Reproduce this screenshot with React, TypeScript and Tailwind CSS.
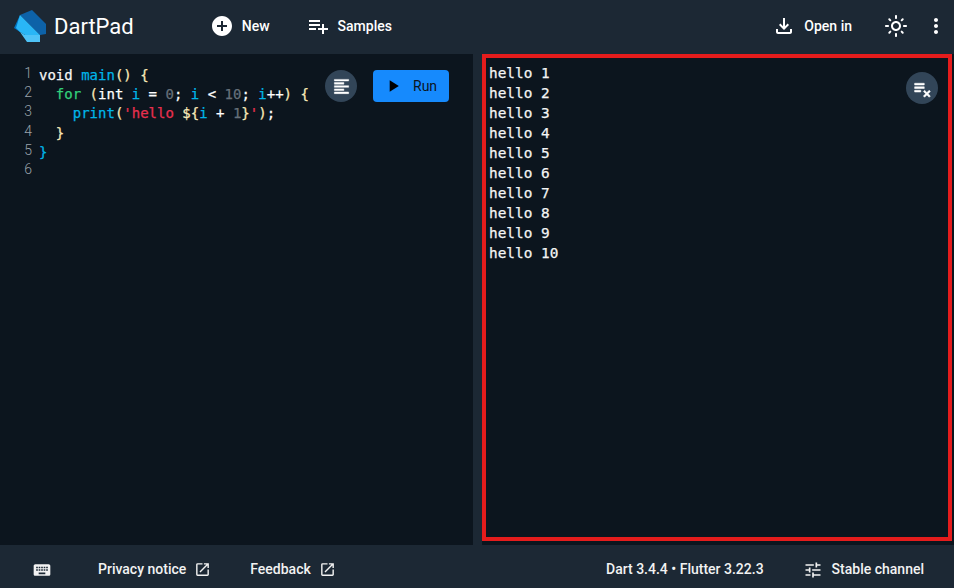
import {
  MdAddCircle,
  MdKeyboard,
  MdLaunch,
  MdMoreVert,
  MdOutlineFileDownload,
  MdOutlineLightMode,
  MdPlayArrow,
  MdPlaylistAdd,
  MdTune,
} from 'react-icons/md';

const DartLogo = () => (
  <svg width="32" height="34" viewBox="0 0 32 34" className="shrink-0">
    <path d="M6 6 L18 1 L32 15 L32 25 L26 26 Z" fill="#0d62a8" />
    <path d="M0 19 L6 6 L6 23 Z" fill="#0175c2" />
    <path d="M6 6 L26 26 L11 26 L6 23 L2 19 Z" fill="#29b6f6" />
    <path d="M11 26 L26 26 L26 33 L13 33 L6 23 Z" fill="#4fc3f7" />
  </svg>
);

// heavier than the icon package glyphs, the reference draws these with a thick stroke
const FormatIcon = () => (
  <svg width="19" height="19" viewBox="0 0 24 24" fill="currentColor" stroke="currentColor" strokeWidth="0.6">
    <path d="M15 15H3v2h12v-2zm0-8H3v2h12V7zM3 13h18v-2H3v2zm0 8h18v-2H3v2zM3 3v2h18V3H3z" />
  </svg>
);

const ClearIcon = () => (
  <svg width="21" height="21" viewBox="0 0 24 24" fill="currentColor" stroke="currentColor" strokeWidth="0.6">
    <path d="M14 10H3v2h11v-2zm0-4H3v2h11V6zM3 16h7v-2H3v2zm11.41 6L17 19.41 19.59 22 21 20.59 18.41 18 21 15.41 19.59 14 17 16.59 14.41 14 13 15.41 15.59 18 13 20.59 14.41 22z" />
  </svg>
);

const HeaderButton = ({ icon, label }: { icon: React.ReactNode; label: string }) => (
  <div className="flex items-center gap-2 text-white text-sm font-medium">
    {icon}
    <span>{label}</span>
  </div>
);

const Kw = ({ c, children }: { c: string; children: React.ReactNode }) => <span className={c}>{children}</span>;

const output = Array.from({ length: 10 }, (_, i) => `hello ${i + 1}`);

export default function App() {
  return (
    <div className="w-[954px] h-[588px] flex flex-col overflow-hidden bg-[#0c151e] font-['Roboto',sans-serif]">
      <header className="h-[54px] shrink-0 bg-[#1c2834] flex items-center pb-[2px] pl-[14px] pr-[6px]">
        <DartLogo />
        <span className="ml-2 text-[22px] text-white">DartPad</span>
        <div className="ml-[76px]">
          <HeaderButton icon={<MdAddCircle size={24} />} label="New" />
        </div>
        <div className="ml-[36px]">
          <HeaderButton icon={<MdPlaylistAdd size={24} />} label="Samples" />
        </div>
        <div className="ml-auto">
          <HeaderButton icon={<MdOutlineFileDownload size={24} />} label="Open in" />
        </div>
        <MdOutlineLightMode size={24} className="ml-[32px] text-white" />
        <MdMoreVert size={24} className="ml-4 text-white" />
      </header>

      <main className="flex-1 flex min-h-0">
        <section className="relative w-[473px] shrink-0 pt-[11px] pl-[23px] font-['DejaVu_Sans_Mono',monospace] text-[14px] leading-[19.2px] flex gap-[7px]">
          <div className="w-[9px] mt-[-1px] text-right text-[#9aa3ab] font-light font-['Roboto',sans-serif]">
            {[1, 2, 3, 4, 5, 6].map((n) => (
              <div key={n}>{n}</div>
            ))}
          </div>
          <div className="mt-[1px] whitespace-pre text-white [-webkit-text-stroke:0.25px]">
            <div>
              <Kw c="text-[#f5f5f5]">void</Kw> <Kw c="text-[#00b4e8]">main</Kw>
              <Kw c="text-[#f8e8b8]">()</Kw> <Kw c="text-[#f8e8b8]">{'{'}</Kw>
            </div>
            <div>
              {'  '}
              <Kw c="text-[#33d17a]">for</Kw> <Kw c="text-[#f8e8b8]">(</Kw>int <Kw c="text-[#00b4e8]">i</Kw> ={' '}
              <Kw c="text-[#66707a]">0</Kw>; <Kw c="text-[#00b4e8]">i</Kw> {'<'} <Kw c="text-[#66707a]">10</Kw>;{' '}
              <Kw c="text-[#00b4e8]">i</Kw>++<Kw c="text-[#f8e8b8]">)</Kw> <Kw c="text-[#f8e8b8]">{'{'}</Kw>
            </div>
            <div>
              {'    '}
              <Kw c="text-[#00b4e8]">print</Kw>
              <Kw c="text-[#f8e8b8]">(</Kw>
              <Kw c="text-[#e8304f]">'hello </Kw>
              <Kw c="text-[#f8e8b8]">{'${'}</Kw>
              <Kw c="text-[#00b4e8]">i</Kw> + <Kw c="text-[#66707a]">1</Kw>
              <Kw c="text-[#f8e8b8]">{'}'}</Kw>
              <Kw c="text-[#e8304f]">'</Kw>
              <Kw c="text-[#f8e8b8]">)</Kw>;
            </div>
            <div>
              {'  '}
              <Kw c="text-[#f8e8b8]">{'}'}</Kw>
            </div>
            <div>
              <Kw c="text-[#00b4e8]">{'}'}</Kw>
            </div>
          </div>

          <div className="absolute top-[16px] left-[325px] flex items-center gap-4">
            <div className="size-8 rounded-full bg-[#324558] flex items-center justify-center text-white">
              <FormatIcon />
            </div>
            <div className="w-[76px] h-8 rounded bg-[#168afd] flex items-center pl-[10px] gap-[10px] text-[#0c151e] text-sm font-['Roboto',sans-serif]">
              <MdPlayArrow size={20} className="text-black" />
              <span>Run</span>
            </div>
          </div>
        </section>

        <div className="w-[9px] shrink-0 bg-[#1c2834]" />

        <section className="relative flex-1 mb-1 mr-[2px] border-4 border-[#e51c1c] pl-[3px] pt-[5px] font-['DejaVu_Sans_Mono',monospace] text-[14.4px] leading-[20px] text-[#f5f5f5] [-webkit-text-stroke:0.25px]">
          {output.map((line) => (
            <div key={line}>{line}</div>
          ))}
          <div className="absolute top-[14px] right-[10px] size-8 rounded-full bg-[#324558] flex items-center justify-center text-white">
            <ClearIcon />
          </div>
        </section>
      </main>

      <footer className="h-[43px] shrink-0 bg-[#1c2834] flex items-center pt-[6px] text-[14px] font-medium text-[#f2f2f2]">
        <MdKeyboard size={20} className="ml-[32px]" />
        <span className="ml-[46px]">Privacy notice</span>
        <MdLaunch size={17} className="ml-2" />
        <span className="ml-[39px]">Feedback</span>
        <MdLaunch size={17} className="ml-2" />
        <span className="ml-auto">Dart 3.4.4 • Flutter 3.22.3</span>
        <MdTune size={20} className="ml-[39px]" />
        <span className="ml-[9px] mr-[30px]">Stable channel</span>
      </footer>
    </div>
  );
}
